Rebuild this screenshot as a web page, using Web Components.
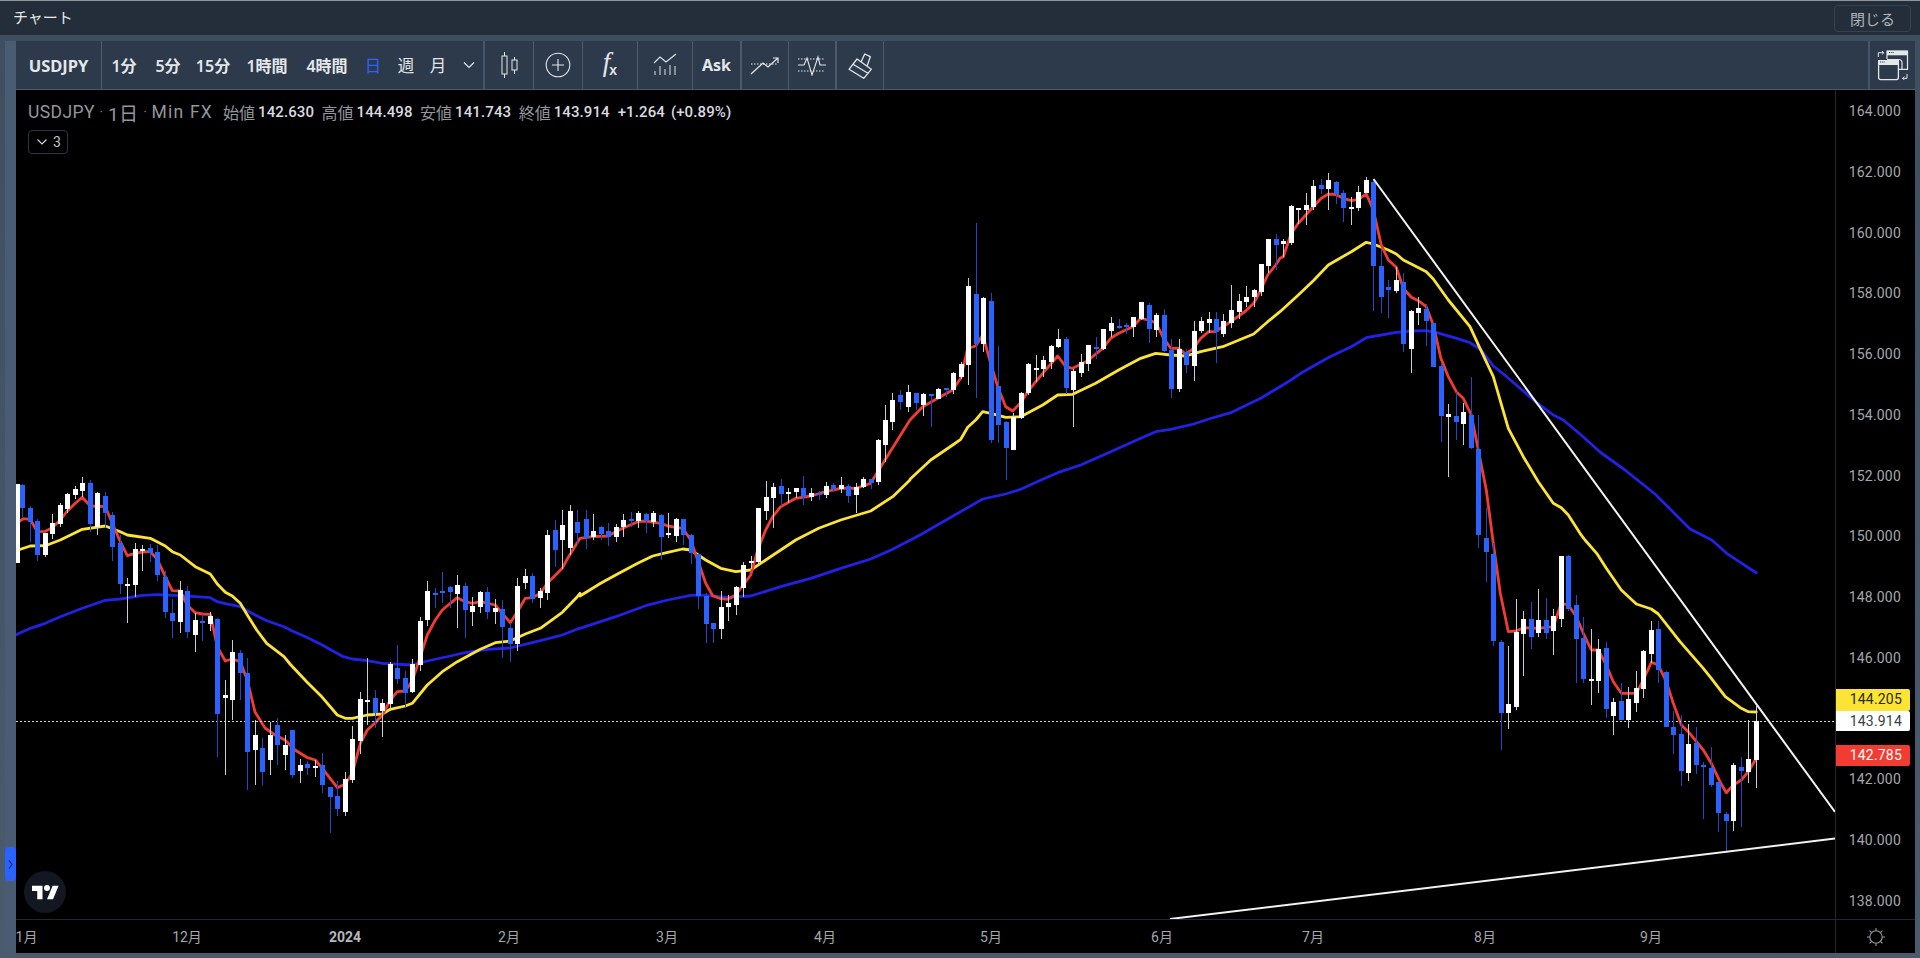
<!DOCTYPE html>
<html lang="ja">
<head>
<meta charset="utf-8">
<title>チャート</title>
<style>
  html, body { margin: 0; height: 100%; background: #3f4f60; overflow: hidden; }
  body { font-family: Roboto, "Noto Sans CJK JP", sans-serif; }
</style>
</head>
<body>
<chart-window>
  <title-bar slot="top" label="チャート" action="閉じる"></title-bar>
  <chart-toolbar slot="bar"></chart-toolbar>
  <candle-pane slot="pane"></candle-pane>
  <chart-legend slot="pane"></chart-legend>
  <side-handle slot="pane"></side-handle>
  <tv-logo slot="pane"></tv-logo>
  <price-axis slot="prices"></price-axis>
  <time-axis slot="times"></time-axis>
  <axis-corner slot="corner"></axis-corner>
</chart-window>

<script>
const FONT = 'Roboto, "Noto Sans CJK JP", sans-serif';
const UI_FONT = '"Noto Sans", "Noto Sans CJK JP", sans-serif';

// candles read off the reference: [x, wickTop, bodyTop, bodyBottom, wickBottom, white?]
// each block has an origin and a scale, so crops can be copied straight over
const CANDLES = [
  { ox: 0, oy: 460, s: 3, d: [
    [50,73,73,310,310,1],[67,72,75,145,170,0],[91,138,143,185,245,0],[112,178,182,286,302,0],[136,218,220,284,290,1],
    [157,163,188,223,236,1],[181,130,136,193,200,1],[202,100,103,146,160,1],[226,78,88,106,118,1],[247,52,70,92,110,1],
    [271,60,70,193,216,0],[292,96,100,200,224,1],[316,96,107,160,205,0],[337,157,165,262,302,0],[361,226,250,373,403,0],
    [382,355,373,377,490,1],[406,250,266,376,410,1],[427,256,266,269,332,1],[451,252,263,278,305,0],[472,256,275,346,362,0],
    [496,332,350,457,473,0],[517,418,459,482,533,0],[541,362,389,487,518,1],[562,377,392,517,533,0],[586,460,479,526,575,1],
    [607,463,483,487,542,0],[631,455,468,491,512,1]
  ]},
  { ox: 0, oy: 0, s: 1, d: [
    [217,618,619,714,757,0],[225,680,695,698,775,1],[232,640,652,700,720,1],[240,650,653,673,700,0],[247,658,673,752,790,0],
    [255,720,735,750,785,1],[262,738,748,772,785,0],[270,722,735,760,775,1],[277,718,725,745,765,0],[285,735,745,755,770,1],
    [547,530,535,593,600,1],[555,520,530,550,567,0],[562,510,525,540,569,1],[570,505,511,548,555,1],[577,510,522,533,545,0],
    [885,405,420,445,462,1],[892,393,400,422,430,1],[900,390,395,402,410,0],[908,385,392,407,412,1]
  ]},
  { ox: 290, oy: 560, s: 3, d: [
    [7,510,510,645,655,0],[31,597,615,632,670,1],[52,603,612,623,645,0],[76,600,618,625,650,1],[97,578,615,674,698,0],
    [121,681,681,710,818,0],[142,663,708,746,767,0],[166,635,657,755,767,1],[187,498,537,659,670,1],[211,395,417,542,582,1],
    [232,293,420,423,494,1],[256,390,414,459,505,0],[277,417,429,452,530,1],[301,305,311,431,447,1],[322,255,323,356,373,0],
    [346,332,354,398,443,0],[367,296,312,397,398,1],[391,172,182,316,332,1],[412,62,92,181,197,1],[436,83,98,101,143,0],
    [457,35,92,100,128,0],[481,78,80,97,145,0],[502,46,74,103,205,1],[526,70,78,151,235,0],[547,110,138,157,197,1],
    [571,92,95,141,160,1],[592,82,96,157,178,0],[616,116,143,157,192,1],[637,120,147,202,293,0],[661,190,204,253,305,0],
    [682,55,77,253,272,1],[706,28,47,70,88,1],[727,40,47,117,128,0],[751,84,92,115,145,1]
  ]},
  { ox: 580, oy: 460, s: 3, d: [
    [17,150,176,233,268,0],[38,163,212,232,240,1],[62,198,200,222,240,0],[83,188,212,230,258,0],[107,192,200,232,246,1],
    [128,163,179,202,230,1],[152,157,178,181,200,0],[173,152,160,182,203,1],[197,160,163,183,218,0],[218,152,160,185,202,1],
    [242,163,166,232,300,0],[263,160,218,226,233,1],[287,175,178,227,245,1],[308,176,176,226,256,0],[332,222,224,280,312,0],
    [353,283,283,408,448,0],[377,400,408,493,550,0],[398,488,488,508,550,0],[422,392,440,506,538,1],[443,405,428,442,482,1],
    [467,378,380,436,464,1],[488,305,314,383,410,1],[512,287,302,310,328,1],[533,143,145,307,315,1],[557,62,110,152,180,1],
    [578,68,80,115,205,1],[602,58,78,103,138,0],[623,85,97,100,130,1],[647,83,83,97,115,1],[668,47,83,110,135,0],
    [692,85,100,111,123,1],[716,92,100,106,120,0],[737,66,77,105,115,1],[758,68,74,87,95,0],[782,50,74,88,98,1],
    [803,73,78,108,128,0],[827,68,80,106,158,1],[848,50,58,82,85,1],[872,56,58,68,88,0],[893,-63,-60,67,75,1]
  ]},
  { ox: 910, oy: 210, s: 3, d: [
    [17,548,550,580,600,0],[38,550,553,584,618,1],[62,553,553,556,652,0],[83,533,536,566,568,1],[107,535,535,538,562,0],
    [128,486,488,540,552,1],[152,455,463,502,508,1],[173,205,229,465,525,1],[197,40,253,403,563,0],[218,262,265,402,426,1],
    [242,250,274,690,700,0],[263,407,529,645,698,0],[287,633,637,715,810,0],[308,610,620,720,720,1],[332,545,550,625,627,1],
    [353,460,463,550,555,1],[377,435,475,480,515,1],[398,438,451,478,500,1],[422,405,408,457,478,1],[443,358,388,412,415,1],
    [467,380,388,535,552,0],[488,478,483,540,652,1],[512,432,457,488,502,1],[533,404,404,463,482,1],[557,382,411,414,447,0],
    [578,358,358,418,420,1],[602,322,340,364,382,1],[626,328,347,350,358,0],[647,340,346,349,372,0],[668,320,322,352,382,1],
    [692,275,277,328,330,1],[716,278,286,357,398,0],[737,310,316,360,382,1],[761,298,316,424,426,0],[782,388,420,537,565,0],
    [806,388,418,536,545,1],[827,418,426,465,490,0],[851,334,364,468,513,1],[872,322,334,364,368,1],[896,305,327,339,368,1],
    [917,307,328,365,458,0],[938,312,334,372,382,1],[962,225,301,338,355,1],[986,252,274,306,328,1],[1007,228,262,276,290,1],
    [1031,236,241,261,290,1],[1052,163,163,246,258,1],[1073,87,87,168,190,1],[1097,73,87,105,180,0]
  ]},
  { ox: 1280, oy: 160, s: 3, d: [
    [10,238,243,251,292,1],[33,134,138,250,255,1],[55,143,143,147,192,1],[78,100,135,150,195,1],[100,60,78,141,150,1],
    [124,57,75,88,102,0],[145,40,60,87,150,1],[169,64,66,102,132,0],[190,90,100,144,186,0],[214,112,141,146,195,1],
    [235,78,97,145,152,1],[259,52,60,100,100,1],[280,60,66,318,453,0],[304,268,318,411,458,0],[325,360,382,390,474,0],
    [349,322,360,394,400,1],[370,340,367,552,576,0],[394,450,453,568,640,1],[415,412,445,459,495,1],[439,433,448,484,558,0],
    [460,485,490,621,621,0]
  ]},
  { ox: 1380, oy: 360, s: 3, d: [
    [184,10,18,168,245,0],[205,133,163,172,352,1],[229,95,169,187,240,0],[250,130,157,192,256,1],[274,52,166,265,268,0],
    [295,165,268,526,565,0],[319,445,533,575,665,0],[340,548,583,842,857,0],[364,840,845,1058,1170,0],[385,857,1032,1060,1108,1],
    [409,718,815,1040,1050,1],[430,752,776,823,947,1],[454,725,776,832,868,0],[475,688,779,820,830,1],[499,713,779,818,838,0],
    [520,748,769,814,886,1],[544,587,589,778,800,1],[565,585,587,748,752,0],[589,705,735,838,968,0]
  ]},
  { ox: 1490, oy: 540, s: 3, d: [
    [280,230,293,418,428,0],[304,268,416,422,494,1],[325,298,327,424,458,1],[349,307,324,508,534,0],[370,474,486,529,586,1],
    [394,428,484,540,540,0],[415,440,477,539,565,1],[439,392,444,490,516,1],[460,330,333,448,475,1],[484,242,270,341,370,1],
    [505,242,267,391,430,0],[529,394,396,560,562,0],[550,513,561,586,641,0],[574,525,582,692,737,0],[595,552,612,700,722,1],
    [619,560,608,674,702,0],[640,665,676,682,836,0],[664,620,684,734,742,0],[685,725,726,818,875,0],[709,817,823,842,938,0],
    [730,670,675,842,872,1],[754,650,682,692,860,0],[775,540,657,695,728,1],[799,497,544,661,743,1]
  ]}
];

// moving averages, same crop blocks, drawn under the candles
const RED = [
  [0,460,[48,190,70,176,91,178,112,215,136,214,157,203,181,180,202,153,226,130,247,112,271,138,316,140,337,190,361,245,382,287,406,280,427,276,451,275,472,298,496,350,517,392,541,393,562,436,586,458,607,462,631,463,652,560,676,603,697,597,721,605,742,660]],
  [0,0,[255,712,265,728,275,735,285,740],1],
  [290,560,[15,570,50,592,76,600,97,625,142,683,166,672,187,640,211,550,232,510,256,488,277,465,301,420,322,395,346,393,367,362,391,290,412,225,436,180,457,150,481,130,502,113,526,125,547,130,571,125,616,135,637,160,661,188,682,155,706,115,727,113,751,100,772,70,817,25,830,0]],
  [580,460,[0,235,38,230,83,228,128,205,173,185,197,183,242,190,263,198,308,205,332,240,353,300,377,370,398,407,422,416,443,418,467,405,512,345,533,270,557,210,578,170,602,140,647,115,692,108,737,95,782,85,827,85,872,70,893,35,915,0]],
  [910,210,[0,630,38,590,83,565,128,540,152,505,173,415,197,408,218,375,242,460,263,530,287,590,308,603,332,578,353,545,398,490,443,438,467,470,488,475,533,452,578,415,602,385,626,370,668,350,692,325,716,330,737,338,761,385,782,415,806,415,827,432,851,415,872,385,896,365,917,365,938,350,962,335,1007,303,1031,280,1052,240,1073,195,1097,165,1110,145]],
  [1280,160,[10,290,33,222,55,190,100,140,124,115,145,102,169,104,190,115,214,122,235,118,259,102,280,150,304,255,325,300,349,322,370,385,394,412,415,422,439,440,460,495,484,600]],
  [1380,360,[185,0,205,50,229,95,250,115,274,165,295,270,319,390,340,550,361,700,385,815,409,813,430,803,475,805,520,800,544,730,565,735,589,770]],
  [1490,540,[280,280,304,330,325,330,349,375,370,425,394,460,439,460,460,420,484,367,505,375,529,425,550,490,574,555,595,575,640,630,664,670,690,725,709,758,730,735,754,720,775,695,799,655]]
];
const YELLOW = [
  [0,460,[48,272,91,258,136,257,181,240,247,208,316,198,361,215,382,225,451,235,496,258,517,275,541,285,586,320,631,342,652,372,676,397,697,408,721,430,742,465,770,510,800,550,852,590,870,612]],
  [290,560,[0,312,50,365,97,412,142,465,166,475,187,475,232,465,277,462,301,448,346,438,367,430,412,375,457,335,502,305,571,268,616,248,661,243,706,222,751,205,817,157,862,110,870,100]],
  [580,460,[0,408,62,370,107,345,173,310,218,288,263,277,308,267,332,270,377,300,422,325,467,335,512,330,557,300,602,270,647,240,716,205,782,180,872,153,938,110,990,60]],
  [910,210,[0,808,62,750,128,705,152,688,173,652,197,630,218,605,242,610,287,622,332,620,398,585,443,555,488,553,557,520,626,480,692,445,737,430,782,435,827,438,872,425,938,410,1031,372,1073,335,1110,305]],
  [1280,160,[55,405,100,362,145,315,214,275,259,247,280,252,325,270,349,282,370,300,394,312,439,335,460,357,505,420,570,500,600,565]],
  [1380,360,[340,50,385,205,430,290,475,365,520,430,544,443,565,465,600,520]],
  [1490,540,[285,0,320,40,349,85,394,150,439,192,484,207,505,222,570,305,640,385,664,415,706,470,754,505,775,515,799,516]]
];
const BLUE = [
  [0,460,[48,524,91,505,136,490,181,470,247,445,316,421,361,417,427,406,472,404,541,407,631,413,652,425,676,431,721,440,760,462,800,482,852,500,870,509]],
  [290,560,[0,210,50,232,97,255,160,290,187,297,232,302,277,310,367,315,412,303,481,288,526,278,592,268,661,264,751,242,817,225,870,204]],
  [580,460,[0,505,107,470,197,437,263,420,332,406,377,406,443,412,512,408,602,380,692,355,782,325,872,297,938,268,1020,225]],
  [910,210,[218,867,287,852,332,838,398,808,443,788,512,765,602,725,692,685,737,665,782,658,851,642,896,627,962,608,1052,565,1110,530]],
  [1280,160,[33,660,62,640,150,590,214,560,259,533,304,525,349,517,394,513,439,512,470,518,530,535,570,548,604,570,640,618]],
  [1380,360,[380,50,470,128,520,165,550,180,600,222]],
  [0,0,[1600,452,1625,470,1655,494,1690,529],1],
  [1490,540,[665,0,710,40,770,80,799,98]]
];

function flatten(blocks) {
  const pts = [];
  for (const [ox, oy, list, scale] of blocks) {
    const s = scale || 3;
    for (let i = 0; i < list.length; i += 2) {
      pts.push((ox + list[i] / s).toFixed(1) + "," + (oy + list[i + 1] / s).toFixed(1));
    }
  }
  return pts.join(" ");
}

class TitleBar extends HTMLElement {
  constructor() {
    super();
    this.attachShadow({ mode: "open" });
    this.shadowRoot.innerHTML = `
      <style>
        :host { display: flex; align-items: center; justify-content: space-between; box-sizing: border-box;
          height: 35px; padding: 0 9px 0 13px; background: #232e3a; border-top: 1px solid #8d959d;
          font: 15px ${UI_FONT}; color: #e6e8ea; }
        span { margin-top: -4px; }
        button { box-sizing: border-box; width: 77px; height: 27px; padding: 0; background: transparent;
          border: 1px solid #35424f; border-radius: 4px; color: #aeb4ba; font: 15px ${UI_FONT}; }
      </style>
      <span>${this.getAttribute("label")}</span>
      <button>${this.getAttribute("action")}</button>
    `;
  }
}

class ToolCell extends HTMLElement {
  constructor() {
    super();
    this.attachShadow({ mode: "open" });
    this.shadowRoot.innerHTML = `
      <style>
        :host { display: flex; align-items: center; justify-content: center; height: 48px;
          font: 600 16px ${UI_FONT}; color: #e4e7ea; white-space: nowrap; }
        :host([active]) { color: #2962ff; }
        :host([plain]) { font-weight: 400; font-size: 16.5px; }
      </style>
      <slot></slot>
    `;
  }
}

class ChartToolbar extends HTMLElement {
  constructor() {
    super();
    this.attachShadow({ mode: "open" });
    this.shadowRoot.innerHTML = `
      <style>
        :host { display: flex; box-sizing: border-box; height: 49px; background: #2c3a4b; border-bottom: 1px solid #4b5a6c; }
        .sym { width: 85px; border-right: 1px solid #4b5a6c; font-weight: 700; font-size: 16.5px; }
        .times { display: grid; grid-template-columns: 44px 44px 46px 62px 58px 34px 32px 32px 29px; border-right: 2px solid #46566a; }
        .c { border-right: 1px solid #4b5a6c; }
        .thick { border-right: 2px solid #4b5a6c; }
        svg { display: block; fill: none; stroke: #e4e7ea; }
        .sp { flex: 1; }
        .f { font: italic 400 27px "Liberation Serif", serif; margin-top: -5px; }
        .x { font: 700 14px "Liberation Sans", sans-serif; margin: 9px 0 0 -1px; }
      </style>
      <tool-cell class="sym">USDJPY</tool-cell>
      <div class="times">
        <tool-cell>1分</tool-cell><tool-cell>5分</tool-cell><tool-cell>15分</tool-cell><tool-cell>1時間</tool-cell><tool-cell>4時間</tool-cell>
        <tool-cell active plain>日</tool-cell><tool-cell plain>週</tool-cell><tool-cell plain>月</tool-cell>
        <tool-cell><svg width="12" height="8" viewBox="0 0 12 8"><path d="M1 1.5l5 5 5-5" stroke-width="1.2"/></svg></tool-cell>
      </div>
      <tool-cell class="c" style="width:48px">
        <svg width="28" height="28" viewBox="0 0 28 28">
          <path d="M9.500 1v4M9.500 23v4M19.500 6v3M19.500 19v4" stroke-width="1"/>
          <rect x="7" y="5" width="5" height="18" stroke-width="1"/><rect x="17" y="9" width="5" height="10" stroke-width="1"/>
        </svg>
      </tool-cell>
      <tool-cell class="c" style="width:48px">
        <svg width="28" height="28" viewBox="0 0 28 28"><circle cx="14" cy="14" r="11.8" stroke-width="1.1"/><path d="M14 8v12M8 14h12" stroke-width="1.1"/></svg>
      </tool-cell>
      <tool-cell class="c" style="width:54px"><span class="f">f</span><span class="x">x</span></tool-cell>
      <tool-cell class="c" style="width:54px">
        <svg width="26" height="24" viewBox="0 0 26 24">
          <path d="M2 10l6-6 6 5 10-8" stroke-width="1.1"/>
          <path d="M3 22v-4M8 22v-9M13 22v-6M18 22v-10M23 22v-9" stroke="#aab2ba" stroke-width="1.4"/>
        </svg>
      </tool-cell>
      <tool-cell class="thick" style="width:47px;font-weight:700;font-size:16px">Ask</tool-cell>
      <tool-cell class="c" style="width:46px">
        <svg width="30" height="22" viewBox="0 0 30 22">
          <path d="M1 10h27" stroke-width="1" stroke-dasharray="1.5 1.5"/>
          <path d="M1 20l12-11 5 4 10-9M23 4h5v5" stroke-width="1.2"/>
        </svg>
      </tool-cell>
      <tool-cell class="thick" style="width:46px">
        <svg width="30" height="22" viewBox="0 0 30 22">
          <path d="M1 5h27M1 17h27" stroke-width="1" stroke-dasharray="1.5 1.5"/>
          <path d="M1 11h6l3-7 5 17 6-18 2 8h6" stroke-width="1.1"/>
        </svg>
      </tool-cell>
      <tool-cell class="c" style="width:46px">
        <svg width="26" height="28" viewBox="0 0 26 28">
          <path d="M2 18.300L10 8 24.300 18.300 16.700 27.300ZM6 13.300L21 22.300M14.300 10.500L17.700 3 23.300 5.700 20.300 14.500" stroke-width="1.3" stroke-linejoin="round"/>
        </svg>
      </tool-cell>
      <div class="sp"></div>
      <tool-cell style="width:47px;border-left:2px solid #46566a;box-sizing:border-box">
        <svg width="32" height="32" viewBox="0 0 32 32">
          <path d="M1.300 8V3.700H6.700M5 2l1.800 1.700L5 5.400" stroke-width="1"/>
          <path d="M30 25v4.300h-4.300M27.300 27.600l-1.700 1.700 1.700 1.700" stroke-width="1"/>
          <path d="M22 20.300h8.500V2H10v8" stroke-width="1.2"/>
          <path d="M10 1.700h20.700v4.600H10z" fill="#e4e7ea" stroke="none"/>
          <path d="M12 3.500h5" stroke="#2c3a4b" stroke-width="1.2" stroke-dasharray="1.200 1"/>
          <path d="M10 10.500h12a3 3 0 0 1 3 3v6.800" stroke-width="1.2"/>
          <rect x="1.600" y="11.600" width="19.800" height="19" rx="2" stroke-width="1.3"/>
          <path d="M1 11h21v5H1z" fill="#e4e7ea" stroke="none"/>
          <path d="M3 13h5" stroke="#2c3a4b" stroke-width="1.2" stroke-dasharray="1.200 1"/>
        </svg>
      </tool-cell>
    `;
  }
}

class CandlePane extends HTMLElement {
  constructor() {
    super();
    this.attachShadow({ mode: "open" });
    let bodies = "";
    for (const block of CANDLES) {
      for (const [zx, wt, bt, bb, wb, white] of block.d) {
        const x = Math.round(block.ox + zx / block.s);
        const y = (v) => Math.round(block.oy + v / block.s);
        const top = y(bt);
        const h = Math.max(2, y(bb) - top);
        const wick = white ? "#c9ccd0" : "#2148c8";
        const fill = white ? "#fff" : "#2962ff";
        bodies += `<rect x="${x}" y="${y(wt)}" width="1" height="${Math.max(1, y(wb) - y(wt))}" fill="${wick}"/>`;
        bodies += `<rect x="${x - 2}" y="${top}" width="5" height="${h}" fill="${fill}"/>`;
      }
    }
    this.shadowRoot.innerHTML = `
      <style>
        :host { display: block; width: 100%; height: 100%; background: #000; }
        svg { display: block; width: 100%; height: 100%; }
        polyline { fill: none; stroke-width: 2.8; stroke-linejoin: round; stroke-linecap: round; }
      </style>
      <svg viewBox="16 90 1819 829" preserveAspectRatio="none">
        <polyline points="${flatten(BLUE)}" stroke="#2222e6"/>
        <polyline points="${flatten(YELLOW)}" stroke="#fbe433"/>
        <polyline points="${flatten(RED)}" stroke="#f23c32"/>
        <path d="M16 721.5H1835" stroke="#d8dade" stroke-width="1" stroke-dasharray="2 2"/>
        ${bodies}
        <path d="M1373.5 179L1835 812M1170 919L1835 838.6" stroke="#f2f2f2" stroke-width="2" fill="none"/>
      </svg>
    `;
  }
}

class ChartLegend extends HTMLElement {
  constructor() {
    super();
    this.attachShadow({ mode: "open" });
    const ohlc = (k, v) => `<span class="k">${k}</span><b>${v}</b>`;
    this.shadowRoot.innerHTML = `
      <style>
        :host { position: absolute; left: 12px; top: 12px; color: #92969e; font: 15.5px ${FONT}; }
        .row { display: flex; align-items: center; height: 20px; white-space: nowrap; }
        .t { font-size: 17.5px; letter-spacing: .4px; }
        .n { font-size: 19px; }
        .m { letter-spacing: 1.2px; }
        .d { margin: 0 5px; font-size: 12px; }
        .k { font-size: 16px; margin-left: 7.5px; }
        .k:first-of-type { margin-left: 0; }
        b { font-weight: 500; color: #d8dbe0; margin-left: 3px; font-size: 15px; letter-spacing: .1px; }
        b.g { margin-left: 8px; }
        b.p { margin-left: 6px; }
        .ohlc { display: flex; align-items: center; margin-left: 10px; }
        button { display: flex; align-items: center; gap: 6px; box-sizing: border-box; width: 40px; height: 24px; margin-top: 8px; padding: 0 0 0 8px;
          background: #000; border: 1px solid #2f3440; border-radius: 4px; color: #c2c5cb; font: 14px ${FONT}; }
        svg { fill: none; stroke: #d8dbe0; }
      </style>
      <div class="row">
        <span class="t">USDJPY</span><span class="d">·</span><span class="t n">1日</span><span class="d">·</span><span class="t m">Min FX</span>
        <div class="ohlc">
          ${ohlc("始値", "142.630")}${ohlc("高値", "144.498")}${ohlc("安値", "141.743")}${ohlc("終値", "143.914")}
          <b class="g">+1.264</b><b class="p">(+0.89%)</b>
        </div>
      </div>
      <button><svg width="10" height="6" viewBox="0 0 10 6"><path d="M.5.5L5 5 9.5.5" stroke-width="1.1"/></svg>3</button>
    `;
  }
}

class SideHandle extends HTMLElement {
  constructor() {
    super();
    this.attachShadow({ mode: "open" });
    this.shadowRoot.innerHTML = `
      <style>
        :host { position: absolute; left: -11px; top: 757px; width: 11px; height: 34px; background: #2962ff;
          border-radius: 4px; display: flex; align-items: center; justify-content: center; }
        svg { fill: none; stroke: #12307f; }
      </style>
      <svg width="5" height="9" viewBox="0 0 5 9"><path d="M1 .5l3 4-3 4" stroke-width="1.2"/></svg>
    `;
  }
}

class TvLogo extends HTMLElement {
  constructor() {
    super();
    this.attachShadow({ mode: "open" });
    this.shadowRoot.innerHTML = `
      <style>
        :host { position: absolute; left: 8px; top: 781px; width: 42px; height: 42px; border-radius: 50%; background: #131722;
          display: flex; align-items: center; justify-content: center; }
        svg { fill: #fff; }
      </style>
      <svg width="27" height="15" viewBox="0 3 36 20"><path d="M14 22H7V11H0V4h14v18zM28 22h-8l7.5-18h8L28 22z"/><circle cx="20" cy="7" r="4"/></svg>
    `;
  }
}

class PriceBadge extends HTMLElement {
  constructor() {
    super();
    this.attachShadow({ mode: "open" });
    this.shadowRoot.innerHTML = `
      <style>
        :host { position: absolute; left: 0; width: 74px; box-sizing: border-box; padding-right: 8px; text-align: right;
          border-radius: 0 2px 2px 0; font: 14px/21px ${FONT}; letter-spacing: .2px; }
      </style>
      <slot></slot>
    `;
  }
}

class PriceAxis extends HTMLElement {
  constructor() {
    super();
    this.attachShadow({ mode: "open" });
    const prices = [];
    for (let p = 164; p >= 138; p -= 2) prices.push(p.toFixed(3));
    this.shadowRoot.innerHTML = `
      <style>
        :host { position: relative; display: flex; flex-direction: column; justify-content: space-between; box-sizing: border-box;
          height: 100%; padding: 11px 14px 8px 0; background: #000; border-left: 1px solid #24272e;
          font: 14px/20px ${FONT}; letter-spacing: .2px; color: #a4a7ad; text-align: right; }
      </style>
      ${prices.map((p) => `<span>${p}</span>`).join("")}
      <price-badge style="top:599px;height:22px;background:#fbe433;color:#2a2a20">144.205</price-badge>
      <price-badge style="top:621px;height:20px;line-height:20px;background:#fff;color:#3a3d45">143.914</price-badge>
      <price-badge style="top:655px;height:21px;background:#f23c32;color:#fff">142.785</price-badge>
    `;
  }
}

class TimeAxis extends HTMLElement {
  constructor() {
    super();
    this.attachShadow({ mode: "open" });
    // label centres are the content on this axis, so they sit on a free strip
    const marks = [["1月", 10.5], ["12月", 171], ["2024", 329, 1], ["2月", 493], ["3月", 651], ["4月", 809], ["5月", 975], ["6月", 1146], ["7月", 1297], ["8月", 1469], ["9月", 1635]];
    this.shadowRoot.innerHTML = `
      <style>
        :host { position: relative; display: block; height: 100%; overflow: hidden; background: #000; border-top: 1px solid #24272e;
          font: 14px/34px ${FONT}; color: #a4a7ad; box-sizing: border-box; }
        span { position: absolute; top: 0; transform: translateX(-50%); }
        .y { font-weight: 700; color: #b4b7bc; }
      </style>
      ${marks.map(([t, x, y]) => `<span class="${y ? "y" : ""}" style="left:${x}px">${t}</span>`).join("")}
    `;
  }
}

class AxisCorner extends HTMLElement {
  constructor() {
    super();
    this.attachShadow({ mode: "open" });
    this.shadowRoot.innerHTML = `
      <style>
        :host { display: flex; align-items: center; justify-content: center; box-sizing: border-box; height: 100%; background: #000;
          border-top: 1px solid #24272e; border-left: 1px solid #24272e; }
        svg { fill: none; stroke: #9a9da3; stroke-width: 1.1; }
      </style>
      <svg width="20" height="20" viewBox="0 0 20 20">
        <circle cx="10" cy="10" r="6.2"/>
        <path d="M10 1v2.500M10 16.500V19M1 10h2.500M16.500 10H19M3.600 3.600l1.800 1.800M14.600 14.600l1.800 1.800M3.600 16.400l1.800-1.800M14.600 5.400l1.800-1.800"/>
      </svg>
    `;
  }
}

class ChartWindow extends HTMLElement {
  constructor() {
    super();
    this.attachShadow({ mode: "open" });
    this.shadowRoot.innerHTML = `
      <style>
        :host { display: flex; flex-direction: column; width: 1920px; height: 958px; background: #3f4f60; }
        .frame { flex: 1; display: flex; padding: 6px 5px 5px 5px; min-height: 0; background: linear-gradient(#3f4f60, #4a5b6e); }
        .rail { width: 11px; background: #4a5c72; }
        .main { flex: 1; display: flex; flex-direction: column; min-width: 0; }
        .chart { flex: 1; display: grid; grid-template-columns: 1819px 80px; grid-template-rows: 829px 34px; min-height: 0; }
        .pane { position: relative; }
      </style>
      <slot name="top"></slot>
      <div class="frame">
        <div class="rail"></div>
        <div class="main">
          <slot name="bar"></slot>
          <div class="chart">
            <div class="pane"><slot name="pane"></slot></div>
            <slot name="prices"></slot>
            <slot name="times"></slot>
            <slot name="corner"></slot>
          </div>
        </div>
      </div>
    `;
  }
}

customElements.define("title-bar", TitleBar);
customElements.define("tool-cell", ToolCell);
customElements.define("chart-toolbar", ChartToolbar);
customElements.define("candle-pane", CandlePane);
customElements.define("chart-legend", ChartLegend);
customElements.define("side-handle", SideHandle);
customElements.define("tv-logo", TvLogo);
customElements.define("price-badge", PriceBadge);
customElements.define("price-axis", PriceAxis);
customElements.define("time-axis", TimeAxis);
customElements.define("axis-corner", AxisCorner);
customElements.define("chart-window", ChartWindow);
</script>
</body>
</html>
